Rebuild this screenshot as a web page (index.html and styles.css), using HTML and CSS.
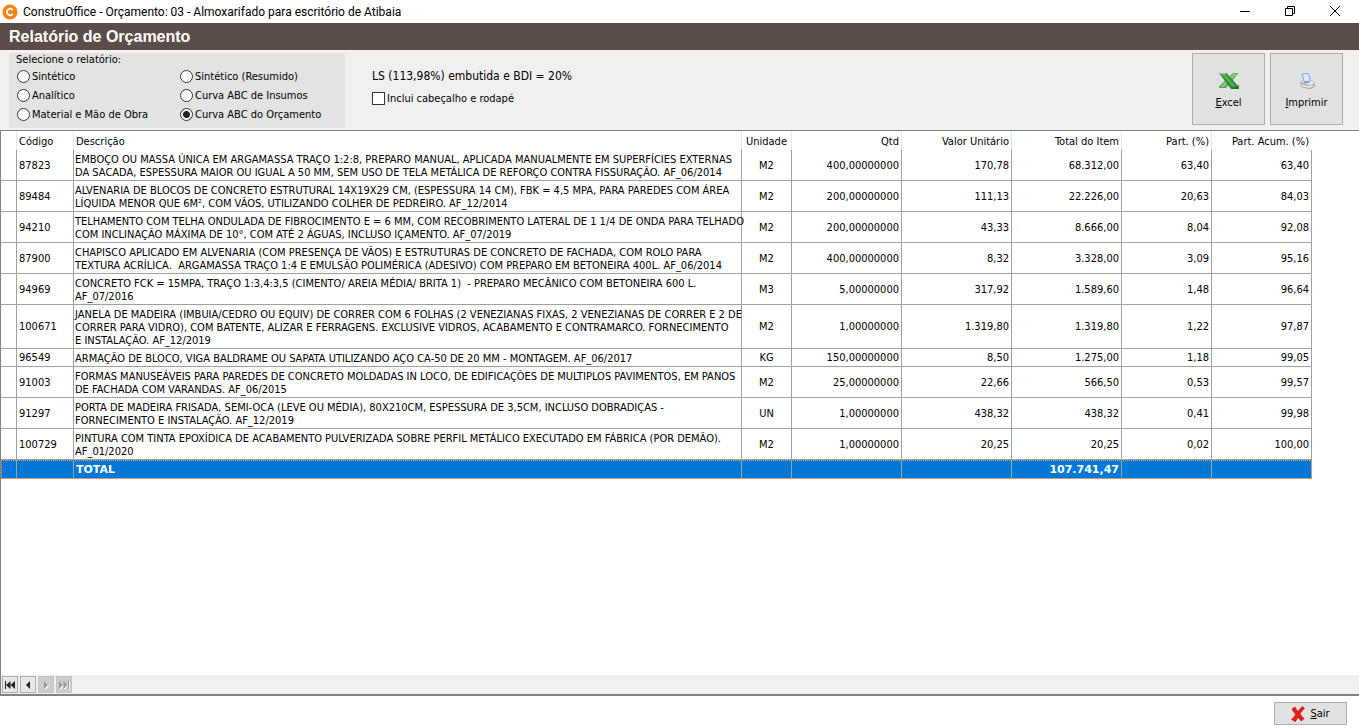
FILE: index.html
```html
<!DOCTYPE html>
<html lang="pt-BR">
<head>
<meta charset="utf-8">
<title>ConstruOffice - Orçamento</title>
<link rel="stylesheet" href="styles.css">
</head>
<body>
<div class="window">
  <header class="titlebar">
    <svg class="app-icon" viewBox="0 0 16 16" aria-hidden="true"><circle cx="8" cy="8" r="7.6" fill="#f58412"/><path d="M10.7 6.1A3.2 3.2 0 1 0 10.7 9.9" fill="none" stroke="#fff" stroke-width="1.9"/></svg>
    <span class="app-title">ConstruOffice - Orçamento: 03 - Almoxarifado para escritório de Atibaia</span>
    <div class="window-controls">
      <button class="window-button" aria-label="Minimizar"><svg viewBox="0 0 12 12"><path d="M1 6.5h10"/></svg></button>
      <button class="window-button" aria-label="Restaurar"><svg viewBox="0 0 12 12"><path d="M1.5 3.5h7v7h-7zM3.500 3.500v-2h7v7h-2"/></svg></button>
      <button class="window-button" aria-label="Fechar"><svg viewBox="0 0 12 12"><path d="M1 1l10 10M11 1L1 11"/></svg></button>
    </div>
  </header>
  <h1 class="heading">Relatório de Orçamento</h1>
  <section class="toolbar">
    <fieldset class="report-group">
      <legend class="report-legend">Selecione o relatório:</legend>
      <div class="report-options">
        <label class="option"><input class="radio" type="radio" name="report">Sintético</label>
        <label class="option"><input class="radio" type="radio" name="report">Sintético (Resumido)</label>
        <label class="option"><input class="radio" type="radio" name="report">Analítico</label>
        <label class="option"><input class="radio" type="radio" name="report">Curva ABC de Insumos</label>
        <label class="option"><input class="radio" type="radio" name="report">Material e Mão de Obra</label>
        <label class="option"><input class="radio" type="radio" name="report" checked>Curva ABC do Orçamento</label>
      </div>
    </fieldset>
    <div class="settings">
      <p class="rates">LS (113,98%) embutida e BDI = 20%</p>
      <label class="option"><input class="checkbox" type="checkbox">Inclui cabeçalho e rodapé</label>
    </div>
    <div class="actions">
      <button class="action-button">
        <svg class="action-icon" viewBox="0 0 20 16" aria-hidden="true">
          <path d="M14 0h5.500L7 15H0v-1.500z" fill="#4fa64a"/>
          <path d="M14.500 .5h4L5 14H1z" fill="#86cc78"/>
          <path d="M0 0h7.500l11 12.500H20V16h-8z" fill="#2f8135"/>
          <path d="M1.500 .8h5L17 13.500h-4z" fill="#57ac50"/>
          <path d="M1 .7h6" fill="none" stroke="#a4d99b"/>
          <path d="M12.500 15h7" stroke="#1f6a2a" fill="none"/>
        </svg>
        <span><u>E</u>xcel</span>
      </button>
      <button class="action-button">
        <svg class="action-icon" viewBox="0 0 20 16" aria-hidden="true">
          <path d="M3.500 9L7 7.500h7l3.500 3v3L13 16l-8.500-2.500z" fill="#b9bcbf" stroke="#999da1" stroke-width=".7"/>
          <path d="M4 9l3.500-1.500H14l3 2.500-4.500 2z" fill="#f6f6f6"/>
          <path d="M5 .8l6.500-.4 2 8H7z" fill="#d9eaff" stroke="#7fabe4"/>
          <path d="M6.500 9.700h6" stroke="#777c80"/>
          <path d="M5 12.500l7 1.700 4-1.700" fill="none" stroke="#fff"/>
          <circle cx="16" cy="11.500" r=".7" fill="#e5ad32"/>
        </svg>
        <span><u>I</u>mprimir</span>
      </button>
    </div>
  </section>
  <main class="grid-area">
    <table class="grid">
      <colgroup><col class="c-mark"><col class="c-code"><col class="c-desc"><col class="c-unit"><col class="c-num"><col class="c-num"><col class="c-num"><col class="c-part"><col class="c-acum"></colgroup>
      <thead>
        <tr><th></th><th>Código</th><th>Descrição</th><th class="center">Unidade</th><th class="right">Qtd</th><th class="right">Valor Unitário</th><th class="right">Total do Item</th><th class="right">Part. (%)</th><th class="right">Part. Acum. (%)</th></tr>
      </thead>
      <tbody>
        <tr><td></td><td>87823</td><td class="desc">EMBOÇO OU MASSA ÚNICA EM ARGAMASSA TRAÇO 1:2:8, PREPARO MANUAL, APLICADA MANUALMENTE EM SUPERFÍCIES EXTERNAS<br>DA SACADA, ESPESSURA MAIOR OU IGUAL A 50 MM, SEM USO DE TELA METÁLICA DE REFORÇO CONTRA FISSURAÇÃO. AF_06/2014</td><td class="center">M2</td><td class="right">400,00000000</td><td class="right">170,78</td><td class="right">68.312,00</td><td class="right">63,40</td><td class="right">63,40</td></tr>
        <tr><td></td><td>89484</td><td class="desc">ALVENARIA DE BLOCOS DE CONCRETO ESTRUTURAL 14X19X29 CM, (ESPESSURA 14 CM), FBK = 4,5 MPA, PARA PAREDES COM ÁREA<br>LÍQUIDA MENOR QUE 6M², COM VÃOS, UTILIZANDO COLHER DE PEDREIRO. AF_12/2014</td><td class="center">M2</td><td class="right">200,00000000</td><td class="right">111,13</td><td class="right">22.226,00</td><td class="right">20,63</td><td class="right">84,03</td></tr>
        <tr><td></td><td>94210</td><td class="desc">TELHAMENTO COM TELHA ONDULADA DE FIBROCIMENTO E = 6 MM, COM RECOBRIMENTO LATERAL DE 1 1/4 DE ONDA PARA TELHADO<br>COM INCLINAÇÃO MÁXIMA DE 10°, COM ATÉ 2 ÁGUAS, INCLUSO IÇAMENTO. AF_07/2019</td><td class="center">M2</td><td class="right">200,00000000</td><td class="right">43,33</td><td class="right">8.666,00</td><td class="right">8,04</td><td class="right">92,08</td></tr>
        <tr><td></td><td>87900</td><td class="desc">CHAPISCO APLICADO EM ALVENARIA (COM PRESENÇA DE VÃOS) E ESTRUTURAS DE CONCRETO DE FACHADA, COM ROLO PARA<br>TEXTURA ACRÍLICA.  ARGAMASSA TRAÇO 1:4 E EMULSÃO POLIMÉRICA (ADESIVO) COM PREPARO EM BETONEIRA 400L. AF_06/2014</td><td class="center">M2</td><td class="right">400,00000000</td><td class="right">8,32</td><td class="right">3.328,00</td><td class="right">3,09</td><td class="right">95,16</td></tr>
        <tr><td></td><td>94969</td><td class="desc">CONCRETO FCK = 15MPA, TRAÇO 1:3,4:3,5 (CIMENTO/ AREIA MÉDIA/ BRITA 1)  - PREPARO MECÂNICO COM BETONEIRA 600 L.<br>AF_07/2016</td><td class="center">M3</td><td class="right">5,00000000</td><td class="right">317,92</td><td class="right">1.589,60</td><td class="right">1,48</td><td class="right">96,64</td></tr>
        <tr><td></td><td>100671</td><td class="desc">JANELA DE MADEIRA (IMBUIA/CEDRO OU EQUIV) DE CORRER COM 6 FOLHAS (2 VENEZIANAS FIXAS, 2 VENEZIANAS DE CORRER E 2 DE<br>CORRER PARA VIDRO), COM BATENTE, ALIZAR E FERRAGENS. EXCLUSIVE VIDROS, ACABAMENTO E CONTRAMARCO. FORNECIMENTO<br>E INSTALAÇÃO. AF_12/2019</td><td class="center">M2</td><td class="right">1,00000000</td><td class="right">1.319,80</td><td class="right">1.319,80</td><td class="right">1,22</td><td class="right">97,87</td></tr>
        <tr><td></td><td>96549</td><td class="desc">ARMAÇÃO DE BLOCO, VIGA BALDRAME OU SAPATA UTILIZANDO AÇO CA-50 DE 20 MM - MONTAGEM. AF_06/2017</td><td class="center">KG</td><td class="right">150,00000000</td><td class="right">8,50</td><td class="right">1.275,00</td><td class="right">1,18</td><td class="right">99,05</td></tr>
        <tr><td></td><td>91003</td><td class="desc">FORMAS MANUSEÁVEIS PARA PAREDES DE CONCRETO MOLDADAS IN LOCO, DE EDIFICAÇÕES DE MULTIPLOS PAVIMENTOS, EM PANOS<br>DE FACHADA COM VARANDAS. AF_06/2015</td><td class="center">M2</td><td class="right">25,00000000</td><td class="right">22,66</td><td class="right">566,50</td><td class="right">0,53</td><td class="right">99,57</td></tr>
        <tr><td></td><td>91297</td><td class="desc">PORTA DE MADEIRA FRISADA, SEMI-OCA (LEVE OU MÉDIA), 80X210CM, ESPESSURA DE 3,5CM, INCLUSO DOBRADIÇAS -<br>FORNECIMENTO E INSTALAÇÃO. AF_12/2019</td><td class="center">UN</td><td class="right">1,00000000</td><td class="right">438,32</td><td class="right">438,32</td><td class="right">0,41</td><td class="right">99,98</td></tr>
        <tr><td></td><td>100729</td><td class="desc">PINTURA COM TINTA EPOXÍDICA DE ACABAMENTO PULVERIZADA SOBRE PERFIL METÁLICO EXECUTADO EM FÁBRICA (POR DEMÃO).<br>AF_01/2020</td><td class="center">M2</td><td class="right">1,00000000</td><td class="right">20,25</td><td class="right">20,25</td><td class="right">0,02</td><td class="right">100,00</td></tr>
        <tr class="total"><td></td><td></td><td>TOTAL</td><td></td><td></td><td></td><td class="right">107.741,47</td><td></td><td></td></tr>
      </tbody>
    </table>
    <nav class="navigator" aria-label="Registros">
      <button class="nav-button" aria-label="Primeiro"><svg viewBox="0 0 12 10"><path d="M1 1h1v8H1zM6.500 1v8L2 5zM11 1v8L6.500 5z"/></svg></button>
      <button class="nav-button" aria-label="Anterior"><svg viewBox="0 0 12 10"><path d="M8 1v8L4 5z"/></svg></button>
      <button class="nav-button" aria-label="Próximo" disabled><svg viewBox="0 0 12 10"><path class="shade" d="M5 2v8l4-4z"/><path d="M4 1v8l4-4z"/></svg></button>
      <button class="nav-button" aria-label="Último" disabled><svg viewBox="0 0 12 10"><path class="shade" d="M2 2v8l4-4zM6 2v8l4-4zM11 2h1v8h-1z"/><path d="M1 1v8l4-4zM5.500 1v8l4-4zM10 1h1v8h-1z"/></svg></button>
    </nav>
  </main>
  <footer class="footer">
    <button class="exit-button">
      <svg class="exit-icon" viewBox="0 0 14 16" aria-hidden="true"><path d="M1 3l3-2c1 2 2 3.500 3 5 1-2 2.500-4 4.500-5.500L13.500 2.500c-2 1.500-3.500 3.500-4.500 5.500 1 2 2.500 3 4 4.500L10.500 15C9 14 8 12.500 7 11c-1 1.500-1.500 3-2.500 4.500L.5 13.500C2 12 3.800 10.500 4.700 8.500 3.500 7 2.200 5 1 3z" fill="#f01818" stroke="#a51212" stroke-width=".7"/></svg>
      <span><u>S</u>air</span>
    </button>
  </footer>
</div>
</body>
</html>
```

FILE: styles.css
```css
* { box-sizing: border-box; }

body {
  margin: 0;
  background: #fff;
  color: #000;
  font: 11px/13px Tahoma, "DejaVu Sans Condensed", "DejaVu Sans", sans-serif;
}

button, input { font: inherit; color: inherit; margin: 0; }

.window {
  display: flex;
  flex-direction: column;
  min-height: 100vh;
}

.titlebar {
  display: flex;
  align-items: center;
  gap: 5px;
  height: 23px;
  padding: 0 2px;
}
.app-icon { width: 16px; height: 16px; }
.app-title { font: 12px/16px Roboto, "Noto Sans", sans-serif; }
.window-controls { display: flex; align-self: flex-start; margin-left: auto; }
.window-button {
  width: 45px;
  height: 21px;
  padding: 0;
  border: 0;
  background: none;
}
.window-button svg {
  display: block;
  width: 12px;
  height: 12px;
  margin: 0 auto;
  fill: none;
  stroke: #000;
}

.heading {
  margin: 0;
  padding: 0 9px;
  background: #5b4e48;
  color: #fff;
  font: bold 16px/27px "Liberation Sans", Arial, sans-serif;
}

.toolbar {
  display: flex;
  align-items: flex-start;
  padding: 3px 16px 2px 9px;
  background: #f0f0f0;
}
.report-group {
  width: 336px;
  min-width: 0;
  margin: 0;
  padding: 0 7px 4px;
  border: 0;
  background: #e3e3e3;
}
.report-legend { float: left; padding: 0; }
.report-options {
  clear: both;
  display: grid;
  grid-template-columns: 163px 1fr;
  grid-auto-rows: 19px;
  padding-top: 1px;
}
.option { display: flex; align-items: center; gap: 2px; }
.radio, .checkbox {
  appearance: none;
  flex: none;
  width: 13px;
  height: 13px;
  margin-left: 1px;
  border: 1px solid #333;
  background: #fff;
}
.radio { border-radius: 50%; }
.radio:checked { background: radial-gradient(circle, #222 3px, #fff 4px); }

.settings { padding: 16px 0 0 26px; }
.settings .option { margin-top: 8px; }
.rates { margin: 0; padding-left: 1px; font-size: 12px; line-height: 15px; }

.actions { display: flex; gap: 5px; margin-left: auto; }
.action-button {
  display: flex;
  flex-direction: column;
  align-items: center;
  justify-content: center;
  gap: 7px;
  width: 73px;
  height: 72px;
  padding: 3px 0 0;
  border: 1px solid #adadad;
  background: #e1e1e1;
}
.action-icon { width: 20px; height: 16px; }

.grid-area {
  flex: 1;
  display: flex;
  flex-direction: column;
  border: solid #828282;
  border-width: 1px 0 2px 1px;
}
.grid {
  table-layout: fixed;
  width: 1311px;
  border-collapse: separate;
  border-spacing: 0;
}
.c-mark { width: 16px; }
.c-code { width: 57px; }
.c-desc { width: 668px; }
.c-unit { width: 50px; }
.c-num { width: 110px; }
.c-part { width: 90px; }
.c-acum { width: 100px; }
.grid th {
  height: 19px;
  padding: 2px 2px 0;
  border-right: 1px solid #e5e5e5;
  font-weight: normal;
  text-align: left;
}
.grid th:last-child { border-right-color: #fff; }
.grid td {
  padding: 2px;
  border: solid #a0a0a0;
  border-width: 0 1px 1px 0;
  white-space: pre;
}
.grid .desc { padding: 3px 0 1px 1px; }
.grid .right { text-align: right; }
.grid .center { text-align: center; }
.total { outline: 1px dotted #e59a52; outline-offset: -1px; }
.grid .total td {
  height: 19px;
  padding: 3px 2px 1px;
  background: #0078d7;
  color: #fff;
  font: bold 11px/14px Verdana, "DejaVu Sans", sans-serif;
}

.navigator {
  display: flex;
  gap: 2px;
  margin-top: auto;
  padding: 1px;
  background: #f0f0f0;
}
.nav-button {
  width: 16px;
  height: 17px;
  padding: 0;
  border: 1px solid #adadad;
  background: #e8e8e8;
}
.nav-button svg { display: block; width: 12px; height: 10px; margin: 0 auto; fill: #222; }
.nav-button:disabled { border-color: #c4c4c4; background: #ccc; }
.nav-button:disabled svg { fill: #999; }
.nav-button .shade { fill: #fff; }

.footer {
  display: flex;
  justify-content: flex-end;
  padding: 6px 12px 3px;
}
.exit-button {
  display: flex;
  align-items: center;
  justify-content: center;
  gap: 5px;
  width: 73px;
  height: 23px;
  padding: 0;
  border: 1px solid #adadad;
  background: #e1e1e1;
}
.exit-icon { width: 14px; height: 16px; }
```
